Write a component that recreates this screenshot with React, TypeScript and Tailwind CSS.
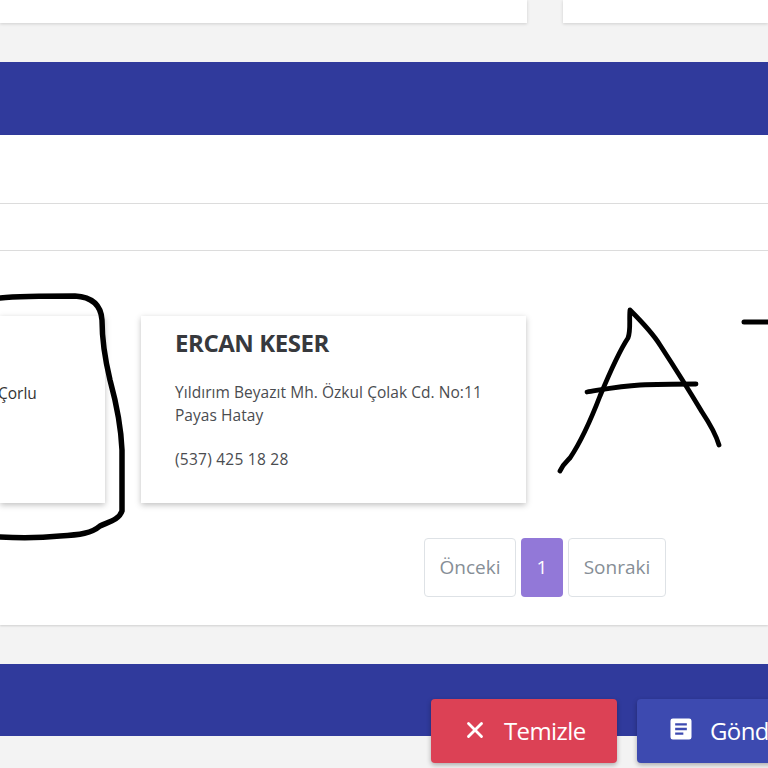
import { X } from 'lucide-react';

function Scribble() {
  return (
    <svg className="absolute left-0 top-0 pointer-events-none" width="768" height="768" viewBox="0 0 768 768" fill="none" stroke="#000" strokeLinecap="round" strokeLinejoin="round">
      <path strokeWidth="5.5" d="M0 298 C20 296 45 296 75 296 C92 297 101 305 102 320 C102 340 104 355 110 380 C116 402 121 425 122 450 C122 475 122 495 122 511 C119 520 108 522 100 526 C92 533 80 535 60 536 C40 538 20 538 0 537" />
      <path strokeWidth="4.8" d="M560 471 C563 464 566 462 570 458 C578 446 590 422 600 396 C610 372 620 350 628 338 C631 330 629 320 630 310 C640 320 652 332 660 345 C675 368 690 392 702 412 C710 424 716 435 719 445" />
      <path strokeWidth="4.8" d="M587 392 C600 390 620 386 640 385 C660 384 680 384 696 384" />
      <path strokeWidth="5" d="M744 322 L768 322" />
    </svg>
  );
}

function Card({ className, children }: { className: string; children: React.ReactNode }) {
  return <div className={`bg-white h-[187px] shadow-[0_2px_6px_rgba(0,0,0,0.25)] ${className}`}>{children}</div>;
}

export default function App() {
  return (
    <div className="relative w-[768px] h-[768px] overflow-hidden bg-[#f3f3f3] font-['Open_Sans','Noto_Sans',sans-serif]">
      {/* top cards, cut off by the scroll */}
      <div className="flex gap-[36px] h-[23px]">
        <div className="w-[527px] bg-white shadow-[0_1px_3px_rgba(0,0,0,0.15)]" />
        <div className="flex-1 bg-white shadow-[0_1px_3px_rgba(0,0,0,0.15)]" />
      </div>

      <div className="mt-[39px] h-[73px] bg-[#303a9c]" />

      <div className="h-[490px] bg-white shadow-[0_1px_2px_rgba(0,0,0,0.15)]">
        <div className="h-[69px] border-b border-[#dcdcdc]" />
        <div className="h-[47px] border-b border-[#dcdcdc]" />

        <div className="flex gap-[36px] pt-[65px]">
          <Card className="w-[105px] pt-[65px]">
            <p className="text-[15.5px] leading-[24px] text-[#333] -ml-[2px]">Çorlu</p>
          </Card>
          <Card className="w-[385px] pl-[34px]">
            <h3 className="pt-[10px] text-[24px] leading-[34px] font-bold text-[#37393d] tracking-[-0.45px]">ERCAN KESER</h3>
            <p className="mt-[21px] text-[15.5px] leading-[23px] text-[#4a4c50] tracking-[0.05px]">
              Yıldırım Beyazıt Mh. Özkul Çolak Cd. No:11<br />Payas Hatay
            </p>
            <p className="mt-[20px] text-[15.5px] leading-[24px] text-[#4a4c50] tracking-[0.25px]">(537) 425 18 28</p>
          </Card>
        </div>

        <div className="flex gap-[5px] mt-[35px] ml-[424px] text-[19px] text-[#868e96]">
          <button className="w-[92px] h-[59px] bg-white border border-[#dee2e6] rounded-[4px]">Önceki</button>
          <button className="w-[42px] h-[59px] bg-[#9278d8] rounded-[4px] text-white">1</button>
          <button className="w-[98px] h-[59px] bg-white border border-[#dee2e6] rounded-[4px]">Sonraki</button>
        </div>
      </div>

      <div className="mt-[39px] h-[72px] bg-[#303a9c]" />

      {/* floating form buttons */}
      <div className="absolute left-[431px] top-[699px] flex gap-[20px] text-[24px] text-white">
        <button className="w-[186px] h-[64px] flex items-center pl-[31px] gap-[16px] bg-[#dc4155] rounded-[4px] shadow-[0_2px_5px_rgba(0,0,0,0.3)]">
          <X size={26} strokeWidth={2.6} className="-mt-[3px]" />
          <span className="tracking-[-0.6px]">Temizle</span>
        </button>
        <button className="w-[200px] h-[64px] flex items-center pl-[30px] gap-[15px] bg-[#3d4ab0] rounded-[4px] shadow-[0_2px_5px_rgba(0,0,0,0.3)]">
          <svg width="28" height="28" viewBox="0 0 24 24" fill="#fff" className="-mt-[4px]">
            <path d="M19 3H5a2 2 0 0 0-2 2v14a2 2 0 0 0 2 2h14a2 2 0 0 0 2-2V5a2 2 0 0 0-2-2zm-5 14H7v-2h7v2zm3-4H7v-2h10v2zm0-4H7V7h10v2z" />
          </svg>
          <span className="tracking-[-0.6px] whitespace-nowrap">Gönder</span>
        </button>
      </div>

      <Scribble />
    </div>
  );
}
